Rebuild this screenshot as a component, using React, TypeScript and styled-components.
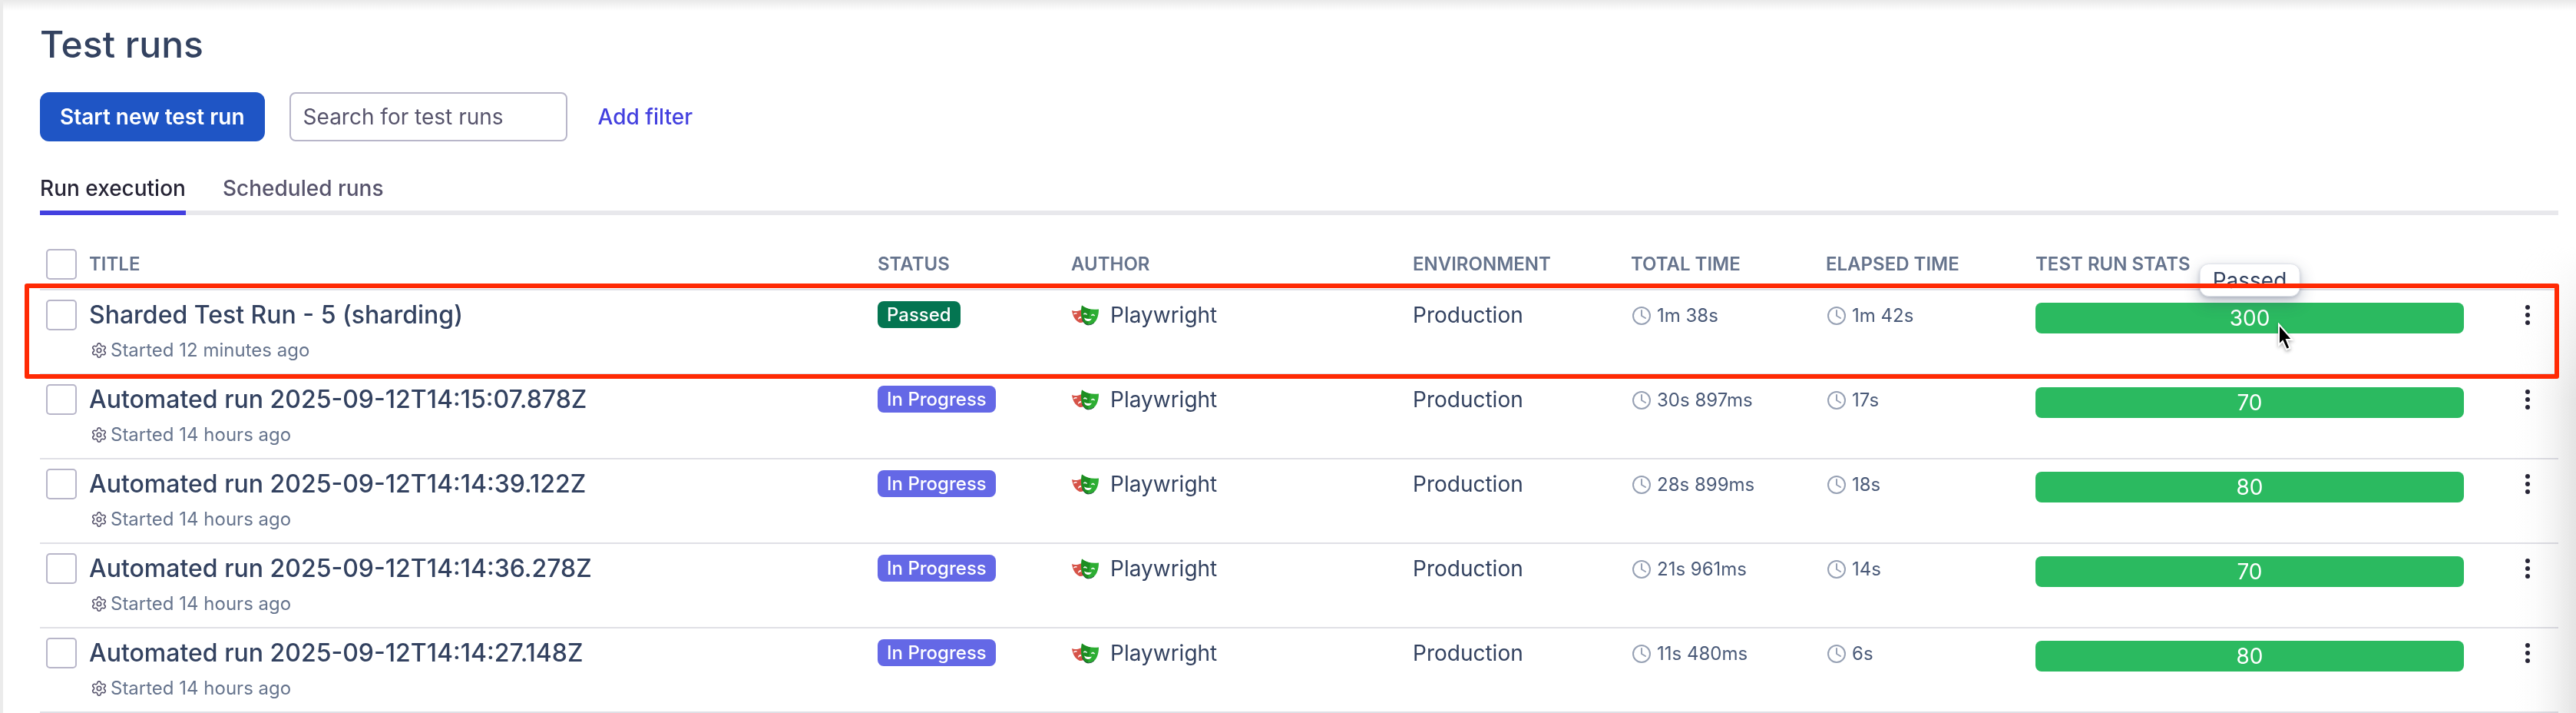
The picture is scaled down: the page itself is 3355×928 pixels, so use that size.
import React from "react";
import styled, { createGlobalStyle } from "styled-components";
import { Settings } from "lucide-react";

type Run = {
  title: string;
  started: string;
  status: "Passed" | "In Progress";
  total: string;
  elapsed: string;
  passed: number;
  highlighted?: boolean;
};

const runs: Run[] = [
  { title: "Sharded Test Run - 5 (sharding)", started: "Started 12 minutes ago", status: "Passed", total: "1m 38s", elapsed: "1m 42s", passed: 300, highlighted: true },
  { title: "Automated run 2025-09-12T14:15:07.878Z", started: "Started 14 hours ago", status: "In Progress", total: "30s 897ms", elapsed: "17s", passed: 70 },
  { title: "Automated run 2025-09-12T14:14:39.122Z", started: "Started 14 hours ago", status: "In Progress", total: "28s 899ms", elapsed: "18s", passed: 80 },
  { title: "Automated run 2025-09-12T14:14:36.278Z", started: "Started 14 hours ago", status: "In Progress", total: "21s 961ms", elapsed: "14s", passed: 70 },
  { title: "Automated run 2025-09-12T14:14:27.148Z", started: "Started 14 hours ago", status: "In Progress", total: "11s 480ms", elapsed: "6s", passed: 80 },
];

const GlobalStyle = createGlobalStyle`
  *, *::before, *::after { box-sizing: border-box; }
  body {
    margin: 0;
    background: #fff;
    color: #334260;
    font-family: Inter, "Liberation Sans", sans-serif;
    font-size: 28px;
    line-height: 40px;
  }
  button, input { font: inherit; color: inherit; }
`;

const Page = styled.main`
  position: relative;
  min-height: 100vh;
  padding: 26px 23px 0 48px;
  border-left: 4px solid #ebebeb;
  &::before {
    content: "";
    position: absolute;
    inset: 0 0 auto 0;
    height: 14px;
    background: linear-gradient(#e9e9e9, #ffffff00);
  }
  &::after {
    content: "";
    position: absolute;
    inset: 320px 0 0 auto;
    width: 80px;
    background: linear-gradient(to right, #e4e4e400, #e4e4e420 35%, #e4e4e470 65%, #e4e4e4);
    mask-image: linear-gradient(transparent, #000 200px);
    mix-blend-mode: multiply;
    pointer-events: none;
  }
`;

const Heading = styled.h1`
  margin: 0;
  font-size: 48px;
  line-height: 64px;
  font-weight: 500;
`;

const Toolbar = styled.div`
  display: flex;
  align-items: center;
  margin-top: 30px;
  gap: 32px;
`;

const PrimaryButton = styled.button`
  height: 64px;
  padding: 0 26px;
  border: 0;
  border-radius: 12px;
  background: #1f55c5;
  color: #fff;
  font-weight: 600;
`;

const SearchInput = styled.input`
  width: 362px;
  height: 64px;
  padding: 0 16px;
  border: 2px solid #b8b6c9;
  border-radius: 8px;
  background: #fff;
  &::placeholder { color: #57546c; opacity: 1; }
`;

const FilterButton = styled.button`
  padding: 0 8px;
  border: 0;
  background: none;
  color: #4340df;
  font-weight: 500;
`;

const Tabs = styled.nav`
  display: flex;
  gap: 48px;
  margin-top: 40px;
  box-shadow: inset 0 -6px #e8e8ec;
`;

const Tab = styled.a<{ $active?: boolean }>`
  padding: 1px 0 9px;
  border-bottom: 6px solid ${(p) => (p.$active ? "#4340df" : "transparent")};
  color: ${(p) => (p.$active ? "#272536" : "#57546c")};
  font-weight: 500;
  text-decoration: none;
`;

const RunTable = styled.table`
  width: 100%;
  margin-top: 28px;
  border-collapse: separate;
  border-spacing: 0;
  table-layout: fixed;
`;

const Col = styled.col<{ $w?: number }>`
  width: ${(p) => (p.$w ? p.$w + "px" : "auto")};
`;

const Head = styled.th`
  height: 70px;
  padding: 4px 0 0;
  border-bottom: 2px solid #e0e0e6;
  color: #66748d;
  font-size: 24px;
  line-height: 32px;
  font-weight: 600;
  text-align: left;
`;

const CheckHead = styled(Head)`
  padding-left: 8px;
`;

const Cell = styled.td`
  height: 110px;
  padding: 12px 0 0;
  border-bottom: 2px solid #e0e0e6;
  vertical-align: top;
`;

const CheckCell = styled(Cell)`
  padding-left: 8px;
`;

const Row = styled.tr<{ $highlighted?: boolean }>`
  position: relative;
  ${(p) => p.$highlighted && `
    & > td:first-child::after {
      content: "";
      position: absolute;
      inset: -9px -1px -5px -20px;
      border: 6px solid #ff2a04;
      border-radius: 3px;
      z-index: 2;
      pointer-events: none;
    }
  `}
`;

const Checkbox = styled.input`
  display: block;
  appearance: none;
  width: 40px;
  height: 40px;
  margin: 0;
  border: 2px solid #b8b6c9;
  border-radius: 5px;
  background: #fff;
`;

const RunTitle = styled.a`
  display: block;
  color: #334260;
  font-size: 32px;
  font-weight: 500;
  text-decoration: none;
`;

const Started = styled.div`
  display: flex;
  align-items: center;
  gap: 4px;
  margin-top: 10px;
  padding-left: 2px;
  color: #66748d;
  font-size: 24px;
  line-height: 32px;
`;

const Badge = styled.span<{ $passed: boolean }>`
  display: inline-block;
  margin-top: 2px;
  padding: 0 12px;
  border-radius: 8px;
  background: ${(p) => (p.$passed ? "#047551" : "#6468e6")};
  color: #fff;
  font-size: 24px;
  line-height: 35px;
  font-weight: 500;
  vertical-align: top;
`;

const Author = styled.div`
  display: flex;
  align-items: center;
  gap: 14px;
`;

const Time = styled.div`
  display: flex;
  align-items: center;
  gap: 6px;
  color: #4a5a78;
  font-size: 24px;
  line-height: 42px;
`;

const Bar = styled.div`
  position: relative;
  height: 40px;
  margin-top: 4px;
  border-radius: 8px;
  background: #2bba60;
  color: #fff;
  text-align: center;
`;

const Tooltip = styled.div`
  position: absolute;
  left: 50%;
  bottom: 48px;
  transform: translateX(-50%);
  padding: 1px 16px 0;
  border: 1px solid #e0e3ea;
  border-radius: 12px;
  background: #fff;
  box-shadow: 0 8px 20px #33426050, 0 2px 4px #33426030;
  color: #334260;
`;

const Cursor = styled.svg`
  position: absolute;
  left: calc(50% + 36px);
  top: 26px;
  filter: drop-shadow(0 2px 2px #00000050);
`;

const MenuButton = styled.button`
  display: block;
  width: 40px;
  height: 40px;
  margin-left: 63px;
  padding: 0;
  border: 0;
  background: none;
  color: #272536;
  svg { display: block; }
`;

const ClockIcon = () => (
  <svg width="28" height="28" viewBox="0 0 28 28" fill="none" stroke="#97a1b4" strokeWidth="2" strokeLinecap="round" strokeLinejoin="round" aria-hidden="true">
    <circle cx="14" cy="14" r="11" />
    <path d="M14 7v7l5 3" />
  </svg>
);

const MasksIcon = () => (
  <svg width="37" height="28" viewBox="0 0 37 28" aria-hidden="true">
    <path d="M1 8c5 2 8 1 13-1l2 16c-3 2-6 1-8-1C4 19 2 14 1 8z" fill="#d65348" />
    <path d="M3.500 13q1.500-2 4-1" fill="none" stroke="#fff" strokeWidth="1.500" />
    <path d="M9 20q0-4 4-4v2q-2 0-4 2z" fill="#fff" />
    <path d="M14 1.500c7 5 14 6 22 5 0 9-3 20.500-14 20.500-7-1-10.500-12-8-25.500z" fill="#2dad33" />
    <path d="M14 1.500c4 3 7 4 11 5L22 27c-7-1-10.500-12-8-25.500z" fill="#1d8d22" />
    <path d="M16 13q2-3 5 0.500-3-1-5-0.500zM26 14.500q3-3 5 0.500-3-1-5-0.500z" fill="#fff" stroke="#fff" strokeWidth="0.600" />
    <path d="M17 17.500q5 2.500 10 1-2 4-5.500 3.500T17 17.500z" fill="#fff" />
    <path d="M14.500 20q2 6 7.500 7 5 0 8-3" fill="none" stroke="#1c3c3a" strokeWidth="0.800" />
  </svg>
);

const DotsIcon = () => (
  <svg width="40" height="40" viewBox="0 0 40 40" fill="currentColor" aria-hidden="true">
    <circle cx="20" cy="10" r="3" />
    <circle cx="20" cy="20" r="3" />
    <circle cx="20" cy="30" r="3" />
  </svg>
);

function RunRow({ run }: { run: Run }) {
  return (
    <Row $highlighted={run.highlighted}>
      <CheckCell><Checkbox type="checkbox" aria-label={`Select ${run.title}`} /></CheckCell>
      <Cell>
        <RunTitle href="#run">{run.title}</RunTitle>
        <Started><Settings size={22} color="#57546c" strokeWidth={1.75} aria-hidden="true" />{run.started}</Started>
      </Cell>
      <Cell><Badge $passed={run.status === "Passed"}>{run.status}</Badge></Cell>
      <Cell><Author><MasksIcon />Playwright</Author></Cell>
      <Cell>Production</Cell>
      <Cell><Time><ClockIcon />{run.total}</Time></Cell>
      <Cell><Time><ClockIcon />{run.elapsed}</Time></Cell>
      <Cell>
        <Bar>
          {run.passed}
          {run.highlighted && (
            <>
              <Tooltip role="tooltip">Passed</Tooltip>
              <Cursor width="24" height="38" viewBox="0 0 24 38" aria-hidden="true">
                <path d="M2 2v27l5-5 5 11 4.500-2-4.500-11h7.500z" fill="#000" stroke="#fff" strokeWidth="2" />
              </Cursor>
            </>
          )}
        </Bar>
      </Cell>
      <Cell><MenuButton type="button" aria-label={`Actions for ${run.title}`}><DotsIcon /></MenuButton></Cell>
    </Row>
  );
}

export default function App() {
  return (
    <>
      <GlobalStyle />
      <Page>
        <Heading>Test runs</Heading>
        <Toolbar>
          <PrimaryButton type="button">Start new test run</PrimaryButton>
          <SearchInput type="text" aria-label="Search for test runs" placeholder="Search for test runs" />
          <FilterButton type="button">Add filter</FilterButton>
        </Toolbar>
        <Tabs aria-label="Test run views">
          <Tab href="#execution" $active aria-current="page">Run execution</Tab>
          <Tab href="#scheduled">Scheduled runs</Tab>
        </Tabs>
        <RunTable>
          <colgroup>
            <Col $w={64} />
            <Col />
            <Col $w={252} />
            <Col $w={445} />
            <Col $w={284} />
            <Col $w={254} />
            <Col $w={273} />
            <Col $w={558} />
            <Col $w={123} />
          </colgroup>
          <thead>
            <tr>
              <CheckHead><Checkbox type="checkbox" aria-label="Select all test runs" /></CheckHead>
              <Head>TITLE</Head>
              <Head>STATUS</Head>
              <Head>AUTHOR</Head>
              <Head>ENVIRONMENT</Head>
              <Head>TOTAL TIME</Head>
              <Head>ELAPSED TIME</Head>
              <Head>TEST RUN STATS</Head>
              <Head aria-label="Actions" />
            </tr>
          </thead>
          <tbody>
            {runs.map((run) => <RunRow key={run.title} run={run} />)}
          </tbody>
        </RunTable>
      </Page>
    </>
  );
}
